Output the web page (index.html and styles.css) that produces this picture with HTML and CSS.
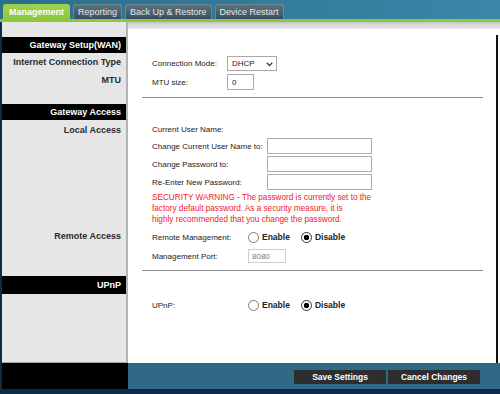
FILE: index.html
```html
<!DOCTYPE html>
<html lang="en">
<head>
    <meta charset="UTF-8">
    <meta name="viewport" content="width=device-width, initial-scale=1.0">
    <title>Management</title>
    <link rel="stylesheet" href="styles.css">
</head>
<body>
    <div class="header">
        <div class="tabs">
            <div class="tab active">Management</div>
            <div class="tab">Reporting</div>
            <div class="tab">Back Up &amp; Restore</div>
            <div class="tab">Device Restart</div>
        </div>
    </div>

    <div class="main">
        <div class="sidebar">
            <div class="side-head">Gateway Setup(WAN)</div>
            <div class="side-row">Internet Connection Type</div>
            <div class="side-row">MTU</div>
            <div class="side-head head-access">Gateway Access</div>
            <div class="side-row local">Local Access</div>
            <div class="side-row remote">Remote Access</div>
            <div class="side-head head-upnp">UPnP</div>
        </div>

        <div class="content">
            <div class="panel">
                <div class="group group-wan">
                    <div class="row">
                        <span class="label label-wan">Connection Mode:</span>
                        <span class="select-wrap">
                            <select class="select">
                                <option>DHCP</option>
                                <option>Static IP</option>
                                <option>PPPoE</option>
                            </select>
                            <svg class="chevron" width="7" height="5" viewBox="0 0 7 5">
                                <path d="M0.8 0.8 L3.5 3.6 L6.2 0.8" fill="none" stroke="#333" stroke-width="1.3"/>
                            </svg>
                        </span>
                    </div>
                    <div class="row row-gap">
                        <span class="label label-wan">MTU size:</span>
                        <input class="text mtu" type="text" value="0">
                    </div>
                </div>

                <div class="group group-access">
                    <div class="row row-short">
                        <span class="label">Current User Name:</span>
                    </div>
                    <div class="row">
                        <span class="label label-access">Change Current User Name to:</span>
                        <input class="text wide" type="text">
                    </div>
                    <div class="row">
                        <span class="label label-access">Change Password to:</span>
                        <input class="text wide" type="password">
                    </div>
                    <div class="row">
                        <span class="label label-access">Re-Enter New Password:</span>
                        <input class="text wide" type="password">
                    </div>
                    <p class="warning">SECURITY WARNING - The password is currently set to the<br>factory default password. As a security measure, it is<br>highly recommended that you change the password.</p>
                    <div class="row row-remote">
                        <span class="label label-remote">Remote Management:</span>
                        <label class="choice"><input type="radio" name="remote"> Enable</label>
                        <label class="choice"><input type="radio" name="remote" checked> Disable</label>
                    </div>
                    <div class="row row-gap">
                        <span class="label label-remote">Management Port:</span>
                        <input class="text port" type="text" value="8080" disabled>
                    </div>
                </div>

                <div class="group-upnp">
                    <div class="row">
                        <span class="label label-upnp">UPnP:</span>
                        <label class="choice"><input type="radio" name="upnp"> Enable</label>
                        <label class="choice"><input type="radio" name="upnp" checked> Disable</label>
                    </div>
                </div>
            </div>
        </div>
    </div>

    <div class="footer">
        <div class="footer-side"></div>
        <div class="footer-bar">
            <button class="button">Save Settings</button>
            <button class="button">Cancel Changes</button>
        </div>
    </div>
</body>
</html>
```

FILE: styles.css
```css
* {
    box-sizing: border-box;
}

body {
    margin: 0;
    background-color: #0b2b49;
    font-family: 'Liberation Sans', Arial, sans-serif;
    font-size: 8px;
    color: #222222;
}

/* top bar with tabs */
.header {
    height: 22px;
    background: linear-gradient(to right, #2a6e8d, #3a87a7);
    border-bottom: 3px solid #8dc63f;
}

.tabs {
    display: flex;
    gap: 3px;
    padding: 4px 0 0 3px;
}

.tab {
    height: 15px;
    line-height: 14px;
    padding: 0 4px;
    font-size: 9px;
    color: #e2e8eb;
    background: linear-gradient(#5c727f, #394e5b);
    border: 1px solid #71858f;
    border-bottom: none;
    border-radius: 3px 3px 0 0;
}

.tab.active {
    padding: 0 5px;
    color: #ffffff;
    font-weight: bold;
    background: linear-gradient(#9fd150, #8dc63f);
    border-color: #9fd150;
}

/* main area */
.main {
    display: flex;
    height: 341px;
    margin-left: 2px;
}

.sidebar {
    width: 126px;
    padding-top: 15px;
    background-color: #e6e6e6;
    border-right: 2px solid #b4b4b4;
    border-bottom: 1px solid #a4a4a4;
}

.side-head {
    height: 16px;
    line-height: 16px;
    padding-right: 5px;
    background-color: #000000;
    color: #ffffff;
    font-size: 9px;
    font-weight: bold;
    text-align: right;
}

.head-access {
    margin-top: 15px;
}

.head-upnp {
    height: 18px;
    line-height: 18px;
    margin-top: 31px;
}

.side-row {
    height: 18px;
    line-height: 18px;
    padding-right: 5px;
    font-size: 9px;
    font-weight: bold;
    color: #2a2a2a;
    text-align: right;
}

.side-row.local {
    height: 20px;
    line-height: 20px;
}

.side-row.remote {
    margin-top: 87px;
}

.content {
    flex: 1;
    display: flex;
    flex-direction: column;
    padding: 13px 2px 0 0;
    background: linear-gradient(#c4c4c4 0, #dcdcdc 3px, #e4e4e4 7px, #ffffff 7px);
}

.panel {
    flex: 1;
    padding: 0 13px 0 14px;
    border-right: 2px solid #111111;
}

.group {
    border-bottom: 1px solid #8c8c8c;
}

.group-wan {
    padding: 19px 0 6px;
}

.group-access {
    padding: 24px 0 5px;
}

.group-upnp {
    padding-top: 25px;
}

.row {
    display: flex;
    align-items: center;
    height: 18px;
    padding-left: 10px;
}

.row-gap {
    margin-top: 1px;
}

.row-short {
    height: 15px;
}

.row-remote {
    margin-top: 3px;
}

.label {
    flex-shrink: 0;
}

.label-wan {
    width: 75px;
}

.label-access {
    width: 115px;
}

.label-remote,
.label-upnp {
    width: 96px;
}

/* form controls */
.select-wrap {
    position: relative;
    display: inline-block;
}

.select {
    appearance: none;
    width: 50px;
    height: 15px;
    margin: 0;
    padding: 0 0 0 4px;
    font-family: 'Liberation Sans', Arial, sans-serif;
    font-size: 8px;
    color: #222222;
    background-color: #ffffff;
    border: 1px solid #a8a8a8;
    border-radius: 0;
}

.chevron {
    position: absolute;
    top: 6px;
    left: 39px;
}

.text {
    height: 16px;
    margin: 0;
    padding: 0 4px;
    font-family: 'Liberation Sans', Arial, sans-serif;
    font-size: 8px;
    color: #222222;
    background-color: #ffffff;
    border: 1px solid #ababab;
}

.mtu {
    width: 27px;
}

.wide {
    width: 105px;
}

.port {
    width: 38px;
    height: 14px;
    padding: 0 3px;
    color: #7a7a7a;
    border-color: #cfcfcf;
}

.warning {
    margin: 1px 0 0;
    padding-left: 10px;
    font-size: 8.2px;
    line-height: 11px;
    color: #ee2127;
}

.choice {
    display: flex;
    align-items: center;
    gap: 3px;
    margin-right: 11px;
    font-size: 8.5px;
    font-weight: bold;
}

.choice input {
    appearance: none;
    width: 11px;
    height: 11px;
    margin: 0;
    border: 1px solid #7a7a7a;
    border-radius: 50%;
    background-color: #ffffff;
}

.choice input:checked {
    border-color: #333333;
    background: radial-gradient(circle, #000000 0, #000000 2.5px, #ffffff 3px);
}

/* bottom bar */
.footer {
    display: flex;
    height: 26px;
    margin-left: 2px;
}

.footer-side {
    width: 126px;
    background-color: #000000;
}

.footer-bar {
    flex: 1;
    display: flex;
    justify-content: flex-end;
    gap: 2px;
    padding: 7px 20px 0 0;
    background-color: #2f6986;
}

.button {
    width: 92px;
    height: 14px;
    padding: 0;
    font-family: 'Liberation Sans', Arial, sans-serif;
    font-size: 8.5px;
    font-weight: bold;
    color: #ffffff;
    background-color: #2e2e2e;
    border: none;
    cursor: pointer;
}
```
